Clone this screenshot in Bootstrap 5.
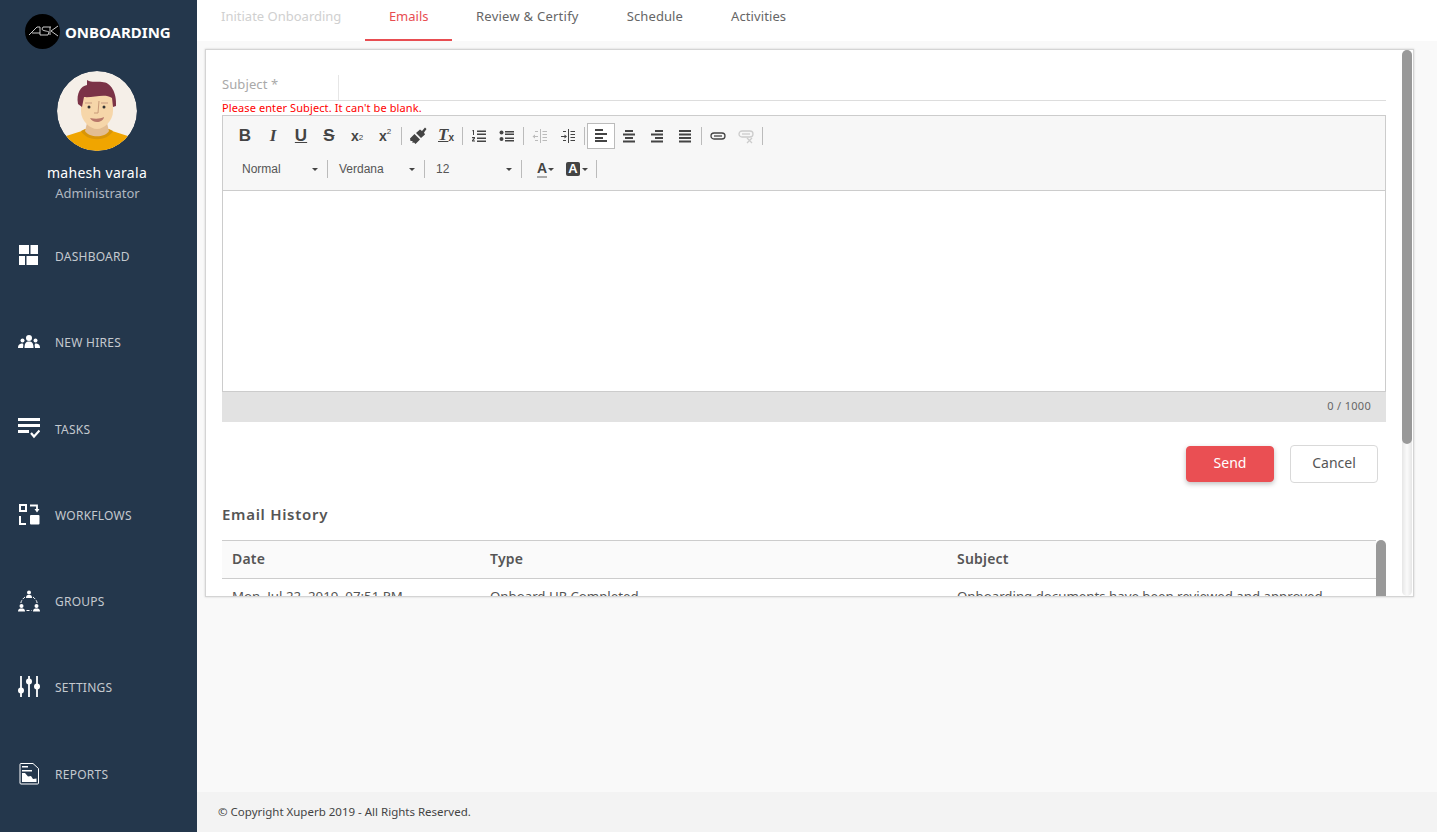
<!DOCTYPE html>
<html lang="en">
<head>
    <meta charset="UTF-8">
    <meta name="viewport" content="width=device-width, initial-scale=1.0">
    <link href="https://cdn.jsdelivr.net/npm/bootstrap@5.3.2/dist/css/bootstrap.min.css" rel="stylesheet">
    <title>Onboarding</title>
    <style>
        body { font-family: "Noto Sans", "Open Sans", sans-serif; background: #f9f9f9; height: 100vh; overflow: hidden; color: #555; }

        /* sidebar */
        .side-bar { width: 197px; background: #24374c; flex-shrink: 0; }
        .brand-row { height: 64px; padding-left: 25px; padding-top: 14px; }
        .brand-logo { width: 35px; height: 35px; border-radius: 50%; background: #000; }
        .brand-name { color: #fff; font-weight: 700; font-size: 15px; margin-left: 5px; }
        .user-pic { width: 80px; height: 80px; border-radius: 50%; margin: 7px 0 0 57px; display: block; }
        .user-name { color: #fff; font-size: 14px; margin-top: 12px; line-height: 20px; padding-right: 3px; letter-spacing: .3px; }
        .user-role { color: #b0b7c0; font-size: 13px; line-height: 20px; padding-right: 2px; }
        .menu-list { margin-top: 20px; }
        .menu-item { height: 86.3px; padding-left: 18px; color: #c4c9cf; font-size: 12px; padding-top: 22px; letter-spacing: .25px; }
        .menu-item svg { width: 22px; height: 22px; margin-right: 15px; flex-shrink: 0; }

        /* top tabs */
        .top-tabs { height: 41px; background: #fff; flex-shrink: 0; }
        .tab-item { padding: 0 24px; font-size: 13px; color: #666; line-height: 33px; height: 41px; border-bottom: 2px solid transparent; letter-spacing: .1px; }
        .tab-item.tab-off { color: #d0d0d0; letter-spacing: 0; }
        .tab-item.tab-on { color: #e84d51; border-bottom-color: #e84d51; letter-spacing: 0; padding: 0 23.5px; }
        .tab-item.tab-wide { letter-spacing: .25px; }

        /* panel */
        .work-panel { margin: 8px 23px 0 8px; height: 548px; background: #fff; border: 1px solid #d4d4d4; box-shadow: 0 0 2px #ccc; overflow: hidden; position: relative; padding: 0 27px 0 16px; }
        .subject-row { height: 51px; padding-top: 25px; border-bottom: 1px solid #ddd; }
        .subject-label { width: 117px; height: 25px; border-right: 1px solid #e6e6e6; font-size: 13px; color: #a9a9a9; line-height: 18px; letter-spacing: .1px; }
        .subject-error { color: #f00; font-size: 11px; line-height: 14px; height: 14px; letter-spacing: .1px; }

        /* editor */
        .edit-bar { background: #f7f7f7; border: 1px solid #ccc; height: 76px; padding: 4px 8px 0; }
        .bar-row { height: 32px; }
        .bar-row + .bar-row { margin-top: 1px; }
        .bar-btn { width: 28px; height: 26px; display: flex; align-items: center; justify-content: center; color: #444; font-family: "Liberation Serif", serif; font-size: 17px; position: relative; border: 1px solid transparent; }
        .bar-btn.sans-key { font-family: "Liberation Sans", sans-serif; font-weight: 700; }
        .bar-btn svg { width: 18px; height: 18px; }
        .bar-btn.btn-on { border: 1px solid #bbb; background: #fff; }
        .bar-sep { width: 5px; height: 18px; position: relative; }
        .bar-sep::after { content: ""; position: absolute; left: 2px; top: 0; width: 1px; height: 100%; background: #bbb; }
        .bar-pick { width: 97px; height: 18px; padding-left: 11px; font-family: "Liberation Sans", sans-serif; font-size: 12px; color: #555; line-height: 18px; border-right: 1px solid #bbb; position: relative; }
        .pick-arrow { position: absolute; left: 81px; top: 8px; border-left: 3px solid transparent; border-right: 3px solid transparent; border-top: 3px solid #444; }
        .edit-area { height: 201px; border: 1px solid #ccc; border-top: 0; }
        .edit-status { height: 30px; background: #e2e2e2; font-size: 11px; line-height: 27px; text-align: right; padding-right: 15px; color: #666; letter-spacing: .3px; }

        /* buttons */
        .act-row { margin-top: 24px; padding-right: 8px; gap: 16px; }
        .act-btn { width: 88px; height: 36px; font-size: 14px; border-radius: 4px; padding: 0 0 2px; line-height: 30px; }
        .act-send { background: #ea4f53; border-color: #ea4f53; color: #fff; box-shadow: 0 2px 5px rgba(0,0,0,.25); }
        .act-cancel { background: #fff; border: 1px solid #d9d9d9; color: #555; height: 38px; margin-top: -1px; }

        /* history */
        .hist-title { font-size: 15px; font-weight: 600; color: #555; margin: 21px 0 16px; line-height: 20px; letter-spacing: .7px; }
        .hist-wrap { position: relative; }
        .hist-table { margin: 0; font-size: 14px; table-layout: fixed; width: 1154px; color: #555; }
        .hist-table th { background: #fafafa; font-weight: 600; padding: 0 10px 2px; height: 38px; vertical-align: middle; border-top: 1px solid #ccc; border-bottom: 1px solid #ccc; color: #555; letter-spacing: .2px; }
        .hist-table td { padding: 8px 10px; color: #555; border: 0; white-space: nowrap; font-size: 13.25px; }
        .scroll-inner { position: absolute; top: 0; right: 0; width: 10px; height: 100px; background: #999; border-radius: 5px; }
        .scroll-outer { position: absolute; top: 0; right: 1px; width: 10px; height: 100%; background: linear-gradient(90deg, #e6e6e6, #fafafa, #e6e6e6); border-radius: 5px; }
        .scroll-thumb { position: absolute; top: 0; left: 0; width: 10px; height: 394px; background: #999; border-radius: 5px; }

        /* footer */
        .foot-bar { height: 40px; background: #f3f3f3; font-size: 11.5px; color: #444; padding-left: 21px; line-height: 40px; flex-shrink: 0; }
    </style>
</head>
<body>
<div class="d-flex vh-100">
    <!-- sidebar -->
    <div class="side-bar d-flex flex-column">
        <div class="brand-row d-flex align-items-start">
            <svg class="brand-logo" viewBox="0 0 35 35">
                <path d="M4 21 L12 13 H15 V21 M7 19 H15 M26 13 H18 L17 15 C17 17 23 17 24 18 L23 21 H15 M25 13 V21 M33 12 L26 17 L33 22" fill="none" stroke="#ddd" stroke-width=".9"/>
            </svg>
            <span class="brand-name" style="line-height:36px">ONBOARDING</span>
        </div>
        <svg class="user-pic" viewBox="0 0 80 80">
            <defs><clipPath id="pic"><circle cx="40" cy="40" r="40"/></clipPath></defs>
            <g clip-path="url(#pic)">
                <rect width="80" height="80" fill="#f5efe8"/>
                <path d="M6 66 L28 59 H52 L74 66 V80 H6 Z" fill="#f0a500"/>
                <path d="M24 60 C30 71 50 71 56 60 L52 58 H28 Z" fill="#d89508"/>
                <path d="M28 60 C32 67 48 67 52 60 L49 48 H31 Z" fill="#e3bd92"/>
                <path d="M24 24 H56 V40 C56 50 47 58 40 58 C33 58 24 50 24 40 Z" fill="#f6d6a9"/>
                <path d="M21 33 C19 22 24 15 30 14 L30 9 C35 12 40 10 45 11 C54 11 60 22 59 35 L56 36 L55 27 C48 22 36 27 27 26 L25 36 Z" fill="#7b3347"/>
                <circle cx="32" cy="36" r="1.500" fill="#333"/>
                <circle cx="47" cy="36" r="1.500" fill="#333"/>
                <path d="M28 32 H35 M44 32 H51" stroke="#c79a80" stroke-width="1"/>
                <path d="M42 30 L41 42 H37" fill="none" stroke="#c89a78" stroke-width="1"/>
                <path d="M33 47 C38 48 43 48 47 46 C46 52 36 53 33 47 Z" fill="#b8776a"/>
            </g>
        </svg>
        <div class="user-name text-center">mahesh varala</div>
        <div class="user-role text-center">Administrator</div>
        <div class="menu-list">
            <div class="menu-item d-flex align-items-start">
                <svg viewBox="0 0 22 22" fill="#fff"><path d="M1 0H11V9H1ZM12.500 0H20V9H12.500ZM1 11H7V20H1ZM8.500 11H20V20H8.500Z"/></svg>
                <span style="line-height:24px">DASHBOARD</span>
            </div>
            <div class="menu-item d-flex align-items-start">
                <svg viewBox="0 0 22 22" fill="#fff"><circle cx="11" cy="7" r="3"/><path d="M6.500 17C6.500 12 8 10.500 11 10.500S15.500 12 15.500 17Z"/><circle cx="4.500" cy="9.500" r="2"/><path d="M0 17C0 13.500 2 12.500 4.500 12.500C5.500 12.500 5.500 14 5 17Z"/><circle cx="17.500" cy="9.500" r="2"/><path d="M22 17C22 13.500 20 12.500 17.500 12.500C16.500 12.500 16.500 14 17 17Z"/></svg>
                <span style="line-height:24px">NEW HIRES</span>
            </div>
            <div class="menu-item d-flex align-items-start">
                <svg viewBox="0 0 22 22" fill="#fff"><path d="M0 0H22V3H0ZM0 6H22V9H0ZM0 12H11V15H0Z"/><path d="M13 15 L16 18.500 L21.500 12.500" fill="none" stroke="#fff" stroke-width="2.200"/></svg>
                <span style="line-height:24px">TASKS</span>
            </div>
            <div class="menu-item d-flex align-items-start">
                <svg viewBox="0 0 22 22" fill="#fff"><path d="M1 0H9V8H1ZM3 2V6H7V2Z" fill-rule="evenodd"/><path d="M12 1.500H19V6" fill="none" stroke="#fff" stroke-width="1.800"/><path d="M16.500 5H21.500L19 8.500Z"/><path d="M2 12V20H8" fill="none" stroke="#fff" stroke-width="2"/><rect x="12" y="11" width="9.500" height="9.500" rx="1"/></svg>
                <span style="line-height:24px">WORKFLOWS</span>
            </div>
            <div class="menu-item d-flex align-items-start">
                <svg viewBox="0 0 22 22" fill="#fff"><circle cx="11" cy="2.500" r="2"/><path d="M8 8C8 5.500 9 5 11 5S14 5.500 14 8Z"/><circle cx="3.500" cy="16" r="2"/><path d="M0 21.500C0 19 1.500 18.500 3.500 18.500S7 19 7 21.500Z"/><circle cx="18.500" cy="16" r="2"/><path d="M15 21.500C15 19 16.500 18.500 18.500 18.500S22 19 22 21.500Z"/><path d="M7 7 C4.500 9 3 11 2.800 13.500 M15 7 C17.500 9 19 11 19.200 13.500 M8.500 20.500 H13.500" fill="none" stroke="#fff" stroke-width="1" stroke-dasharray="3 1.500"/></svg>
                <span style="line-height:24px">GROUPS</span>
            </div>
            <div class="menu-item d-flex align-items-start">
                <svg viewBox="0 0 22 22" fill="#fff"><path d="M3 0V21M11 0V21M19 0V21" stroke="#fff" stroke-width="1.800"/><circle cx="3" cy="14.500" r="3"/><circle cx="11" cy="5.500" r="3"/><circle cx="19" cy="10.500" r="3"/></svg>
                <span style="line-height:24px">SETTINGS</span>
            </div>
            <div class="menu-item d-flex align-items-start">
                <svg viewBox="0 0 22 22" fill="#fff"><path d="M2 1.500A1 1 0 0 1 3 .5H15L20.500 5.500V20A1 1 0 0 1 19.500 21H3A1 1 0 0 1 2 20Z" fill="none" stroke="#fff" stroke-width="1"/><path d="M4 3H10V4.500H4ZM4 7H14V8.500H4Z"/><path d="M4 19V10L7 10L10 13.500L13 13L15 16L18.500 15.500V19Z"/></svg>
                <span style="line-height:24px">REPORTS</span>
            </div>
        </div>
    </div>

    <!-- main -->
    <div class="flex-grow-1 d-flex flex-column" style="min-width:0">
        <div class="top-tabs d-flex">
            <div class="tab-item tab-off">Initiate Onboarding</div>
            <div class="tab-item tab-on">Emails</div>
            <div class="tab-item tab-wide">Review &amp; Certify</div>
            <div class="tab-item">Schedule</div>
            <div class="tab-item">Activities</div>
        </div>

        <div class="flex-grow-1">
            <div class="work-panel">
                <div class="subject-row"><div class="subject-label">Subject *</div></div>
                <div class="subject-error">Please enter Subject. It can't be blank.</div>

                <div class="edit-bar">
                    <div class="bar-row d-flex align-items-center">
                        <span class="bar-btn sans-key">B</span>
                        <span class="bar-btn fw-bold fst-italic">I</span>
                        <span class="bar-btn sans-key text-decoration-underline">U</span>
                        <span class="bar-btn sans-key text-decoration-line-through">S</span>
                        <span class="bar-btn sans-key" style="font-size:14px">x<sub style="font-size:8px;font-weight:400">2</sub></span>
                        <span class="bar-btn sans-key" style="font-size:14px">x<sup style="font-size:8px;font-weight:400">2</sup></span>
                        <span class="bar-sep"></span>
                        <span class="bar-btn"><svg viewBox="0 0 18 18" fill="#444"><path d="M1 11.500L5.500 7L11 12.500L6.500 17L5 15.500L3.500 16L3.500 14L1.500 14Z"/><path d="M7 6L11 2.500L13 4L16 .5L17.500 2L15 5.500L16 7.500L12 11Z"/></svg></span>
                        <span class="bar-btn fw-bold fst-italic" style="padding-bottom:2px"><span class="text-decoration-underline">T</span><sub style="font-size:10px;font-family:'Liberation Sans',sans-serif;font-style:normal">x</sub></span>
                        <span class="bar-sep"></span>
                        <span class="bar-btn"><svg viewBox="0 0 18 18" fill="#444"><path d="M7 3.500H16V5H7ZM7 6.500H16V8H7ZM7 10.500H16V12H7ZM7 13.500H16V15H7Z"/><path d="M2.500 3H4V8H3V4.200H2.500ZM2 10H5V11.500L3.300 13.500H5V14.500H2V13.300L3.800 11.200H2Z"/></svg></span>
                        <span class="bar-btn"><svg viewBox="0 0 18 18" fill="#444"><path d="M7 4H16V5.500H7ZM7 6.500H16V8H7ZM7 10.500H16V12H7ZM7 13H16V14.500H7Z"/><circle cx="3.500" cy="5.500" r="2"/><circle cx="3.500" cy="12" r="2"/></svg></span>
                        <span class="bar-sep"></span>
                        <span class="bar-btn"><svg viewBox="0 0 18 18" fill="#bbb"><path d="M9 2H10V16H9ZM11.500 4H16V5H11.500ZM11.500 7H16V8H11.500ZM11.500 10H16V11H11.500ZM11.500 13H16V14H11.500ZM4 4H7V5H4ZM4 13H7V14H4ZM3 9L7 9V10H3Z"/><path d="M1.500 9.500L4 7.500V11.500Z"/></svg></span>
                        <span class="bar-btn"><svg viewBox="0 0 18 18" fill="#444"><path d="M9 2H10V16H9ZM11.500 4H16V5H11.500ZM11.500 7H16V8H11.500ZM11.500 10H16V11H11.500ZM11.500 13H16V14H11.500ZM4 4H7V5H4ZM4 13H7V14H4ZM2 9H6V10H2Z"/><path d="M8 9.500L5.500 7.500V11.500Z"/></svg></span>
                        <span class="bar-sep"></span>
                        <span class="bar-btn btn-on"><svg viewBox="0 0 18 18" fill="#444"><path d="M2 3H10V5H2ZM2 7H14V9H2ZM2 11H10V13H2ZM2 14H14V16H2Z" transform="translate(1 -1)"/></svg></span>
                        <span class="bar-btn"><svg viewBox="0 0 18 18" fill="#444"><path d="M5 3H13V5H5ZM3 6.500H15V8.500H3ZM5 10H13V12H5ZM3 13.500H15V15.500H3Z"/></svg></span>
                        <span class="bar-btn"><svg viewBox="0 0 18 18" fill="#444"><path d="M7 3H15V5H7ZM3 6.500H15V8.500H3ZM7 10H15V12H7ZM3 13.500H15V15.500H3Z"/></svg></span>
                        <span class="bar-btn"><svg viewBox="0 0 18 18" fill="#444"><path d="M3 3H15V5H3ZM3 6.500H15V8.500H3ZM3 10H15V12H3ZM3 13.500H15V15.500H3Z"/></svg></span>
                        <span class="bar-sep"></span>
                        <span class="bar-btn"><svg viewBox="0 0 18 18" fill="none" stroke="#444" stroke-width="1.300"><rect x="2" y="6" width="14" height="6" rx="3"/><path d="M5 9H13"/></svg></span>
                        <span class="bar-btn"><svg viewBox="0 0 18 18" fill="none" stroke="#ccc" stroke-width="1.300"><rect x="2" y="4" width="14" height="6" rx="3"/><path d="M5 7H13"/><path d="M10 11L15 16M15 11L10 16"/></svg></span>
                        <span class="bar-sep"></span>
                    </div>
                    <div class="bar-row d-flex align-items-center">
                        <div class="bar-pick">Normal<span class="pick-arrow"></span></div>
                        <div class="bar-pick">Verdana<span class="pick-arrow"></span></div>
                        <div class="bar-pick">12<span class="pick-arrow"></span></div>
                        <span class="bar-btn sans-key" style="width:30px;margin-left:7px;font-size:14px"><span style="border-bottom:2px solid #aaa;line-height:15px;margin-right:4px">A</span><span class="pick-arrow" style="left:18px;top:11px"></span></span>
                        <span class="bar-btn sans-key" style="width:30px;margin-left:2px;font-size:13px"><span style="background:#444;color:#fff;border-radius:2px;line-height:14px;padding:0 2px;margin-right:6px">A</span><span class="pick-arrow" style="left:20px;top:11px"></span></span>
                        <span class="bar-sep" style="margin-left:3px"></span>
                    </div>
                </div>
                <div class="edit-area"></div>
                <div class="edit-status">0 / 1000</div>

                <div class="act-row d-flex justify-content-end">
                    <button class="btn act-btn act-send">Send</button>
                    <button class="btn act-btn act-cancel">Cancel</button>
                </div>

                <div class="hist-title">Email History</div>
                <div class="hist-wrap">
                    <table class="table hist-table">
                        <colgroup><col style="width:258px"><col style="width:467px"><col></colgroup>
                        <thead><tr><th>Date</th><th>Type</th><th>Subject</th></tr></thead>
                        <tbody><tr><td>Mon, Jul 22, 2019, 07:51 PM</td><td>Onboard HR Completed</td><td>Onboarding documents have been reviewed and approved</td></tr></tbody>
                    </table>
                    <div class="scroll-inner"></div>
                </div>

                <div class="scroll-outer"><div class="scroll-thumb"></div></div>
            </div>
        </div>

        <div class="foot-bar">© Copyright Xuperb 2019 - All Rights Reserved.</div>
    </div>
</div>
</body>
</html>
